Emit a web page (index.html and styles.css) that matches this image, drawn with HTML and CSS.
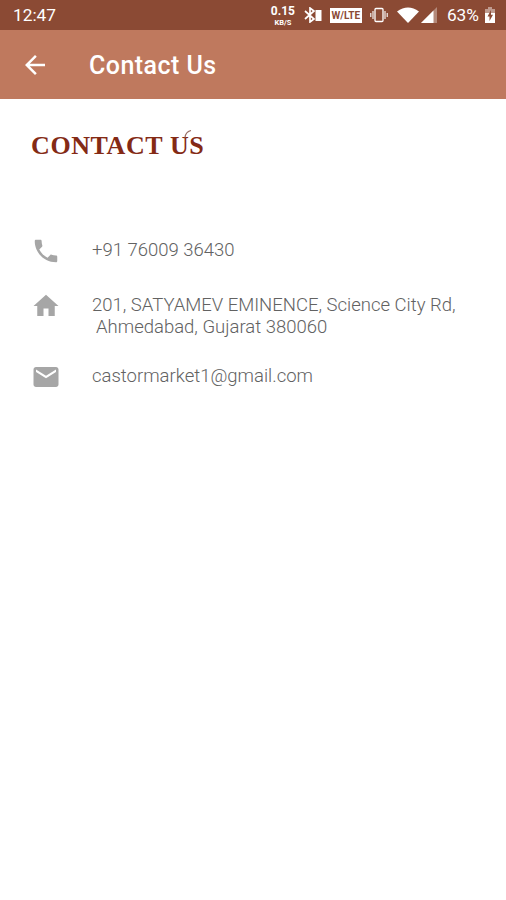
FILE: index.html
```html
<!DOCTYPE html>
<html lang="en">

<head>
  <meta charset="UTF-8">
  <meta name="viewport" content="width=device-width, initial-scale=1.0">
  <title>Contact Us</title>
  <link rel="stylesheet" href="styles.css">
</head>

<body>
  <div class="status-bar">
    <span class="clock">12:47</span>
    <div class="status-icons">
      <div class="net-speed">
        <span class="speed">0.15</span>
        <span class="unit">KB/S</span>
      </div>
      <svg class="bluetooth" width="18" height="16" viewBox="0 0 18 16">
        <path d="M1 4l9 8-4 3V1l4 3-9 8" fill="none" stroke="#fff" stroke-width="1.7"/>
        <path d="M11.500 3h6v11h-6z" fill="#fff"/>
      </svg>
      <span class="lte">W/LTE</span>
      <svg class="vibrate" width="18" height="16" viewBox="0 0 18 16">
        <rect x="5" y="1.500" width="8" height="13" rx="1" fill="none" stroke="#fff" stroke-width="1.300"/>
        <path d="M3 4v8M15 4v8M.8 6v4M17.2 6v4" stroke="#fff" stroke-width="1.1"/>
      </svg>
      <svg class="wifi" width="22" height="16" viewBox="0 0 22 16">
        <path d="M0 4.500Q11-3.500 22 4.500L11 16z" fill="#fff"/>
      </svg>
      <svg class="signal" width="16" height="16" viewBox="0 0 16 16">
        <path d="M0 16L16 0v16z" fill="#fff" opacity=".35"/>
        <path d="M0 16L12.500 3.500V16z" fill="#fff"/>
      </svg>
      <span class="percent">63%</span>
      <svg class="battery" width="10" height="16" viewBox="0 0 10 16">
        <path d="M3 0h4v2h3v4H0V2h3z" fill="#fff" opacity=".45"/>
        <path d="M0 6h10v10H0z" fill="#fff"/>
        <path d="M6 3L2.500 9.500h2V14L8 7.800H6z" fill="#8b4a34"/>
      </svg>
    </div>
  </div>

  <header>
    <svg class="back" viewBox="0 0 24 24">
      <path d="M20 11H7.830l5.590-5.590L12 4l-8 8 8 8 1.410-1.410L7.830 13H20v-2z"/>
    </svg>
    <h1>Contact Us</h1>
  </header>

  <main>
    <h2>CONTACT <span class="us">U<svg class="swash" viewBox="0 0 8 8"><path d="M1 7.500Q1.500 2 7 .5" fill="none" stroke="#9a7268" stroke-width="1.200"/></svg></span>S</h2>

    <div class="row phone">
      <svg class="icon" viewBox="0 0 24 24">
        <path d="M6.620 10.790c1.440 2.830 3.760 5.140 6.590 6.590l2.200-2.200c.27-.27.67-.36 1.020-.24 1.120.37 2.330.57 3.570.57.55 0 1 .45 1 1V20c0 .55-.45 1-1 1-9.390 0-17-7.610-17-17 0-.55.45-1 1-1h3.500c.55 0 1 .45 1 1 0 1.250.2 2.450.57 3.570.11.35.03.74-.25 1.020l-2.200 2.200z"/>
      </svg>
      <p>+91 76009 36430</p>
    </div>

    <div class="row address">
      <svg class="icon" viewBox="0 0 24 24">
        <path d="M10 20v-6h4v6h5v-8h3L12 3 2 12h3v8z"/>
      </svg>
      <p>201, SATYAMEV EMINENCE, Science City Rd,<br><span class="city">Ahmedabad, Gujarat 380060</span></p>
    </div>

    <div class="row email">
      <svg class="icon" viewBox="0 0 24 24">
        <path d="M20 4H4c-1.100 0-1.990.9-1.990 2L2 18c0 1.100.9 2 2 2h16c1.100 0 2-.9 2-2V6c0-1.100-.9-2-2-2zm0 4l-8 5-8-5V6l8 5 8-5v2z"/>
      </svg>
      <p>castormarket1@gmail.com</p>
    </div>
  </main>
</body>

</html>
```

FILE: styles.css
```css
body {
  font-family: Roboto, 'Liberation Sans', sans-serif;
  margin: 0;
  background-color: #fff;
}

svg {
  display: block;
  flex: none;
}

.status-bar {
  display: flex;
  align-items: center;
  justify-content: space-between;
  height: 30px;
  padding: 0 11px 0 13px;
  box-sizing: border-box;
  background-color: #8b4a34;
  color: #fff;
}

.clock, .percent {
  font-size: 17.3px;
  line-height: 30px;
}

.status-icons {
  display: flex;
  align-items: center;
}

.net-speed {
  display: flex;
  flex-direction: column;
  align-items: center;
  width: 24px;
  margin-right: 9px;
  font-weight: 700;
}

.speed {
  font-size: 12px;
  line-height: 14px;
}

.unit {
  font-size: 7.5px;
  line-height: 9px;
}

.bluetooth {
  margin-right: 8px;
}

.lte {
  width: 32px;
  height: 15px;
  margin-right: 8px;
  background-color: #fff;
  color: #8b4a34;
  font-size: 10px;
  font-weight: 700;
  line-height: 15px;
  text-align: center;
}

.vibrate {
  margin-right: 9px;
}

.wifi {
  margin-right: 2px;
}

.signal {
  margin-right: 10px;
}

.percent {
  margin-right: 6px;
}

header {
  display: flex;
  align-items: center;
  height: 69px;
  padding-left: 20px;
  box-sizing: border-box;
  background-color: #bf795e;
  color: #fff;
}

.back {
  width: 30px;
  height: 30px;
  fill: #fff;
}

h1 {
  margin: 2px 0 0 39px;
  font-size: 25px;
  font-weight: 500;
  letter-spacing: 0.45px;
}

main {
  padding: 32px 31px 0;
}

h2 {
  height: 30px;
  margin: 0 0 75px;
  color: #842a15;
  font-family: 'Liberation Serif', serif;
  font-size: 26px;
  font-weight: 700;
  letter-spacing: 0.6px;
  line-height: 30px;
  white-space: nowrap;
}

.us {
  position: relative;
}

.swash {
  position: absolute;
  top: -1px;
  right: -3px;
  width: 8px;
  height: 8px;
}

.row {
  display: flex;
  align-items: flex-start;
}

.icon {
  width: 30px;
  height: 30px;
  margin-right: 31px;
  fill: #a6a6a6;
}

.row p {
  margin: 3px 0 0;
  color: #626262;
  font-size: 18.5px;
  font-weight: 300;
  line-height: 22px;
  white-space: nowrap;
}

.address {
  margin-top: 25px;
}

.city {
  margin-left: 4px;
}

.email {
  margin-top: 24px;
}
```
